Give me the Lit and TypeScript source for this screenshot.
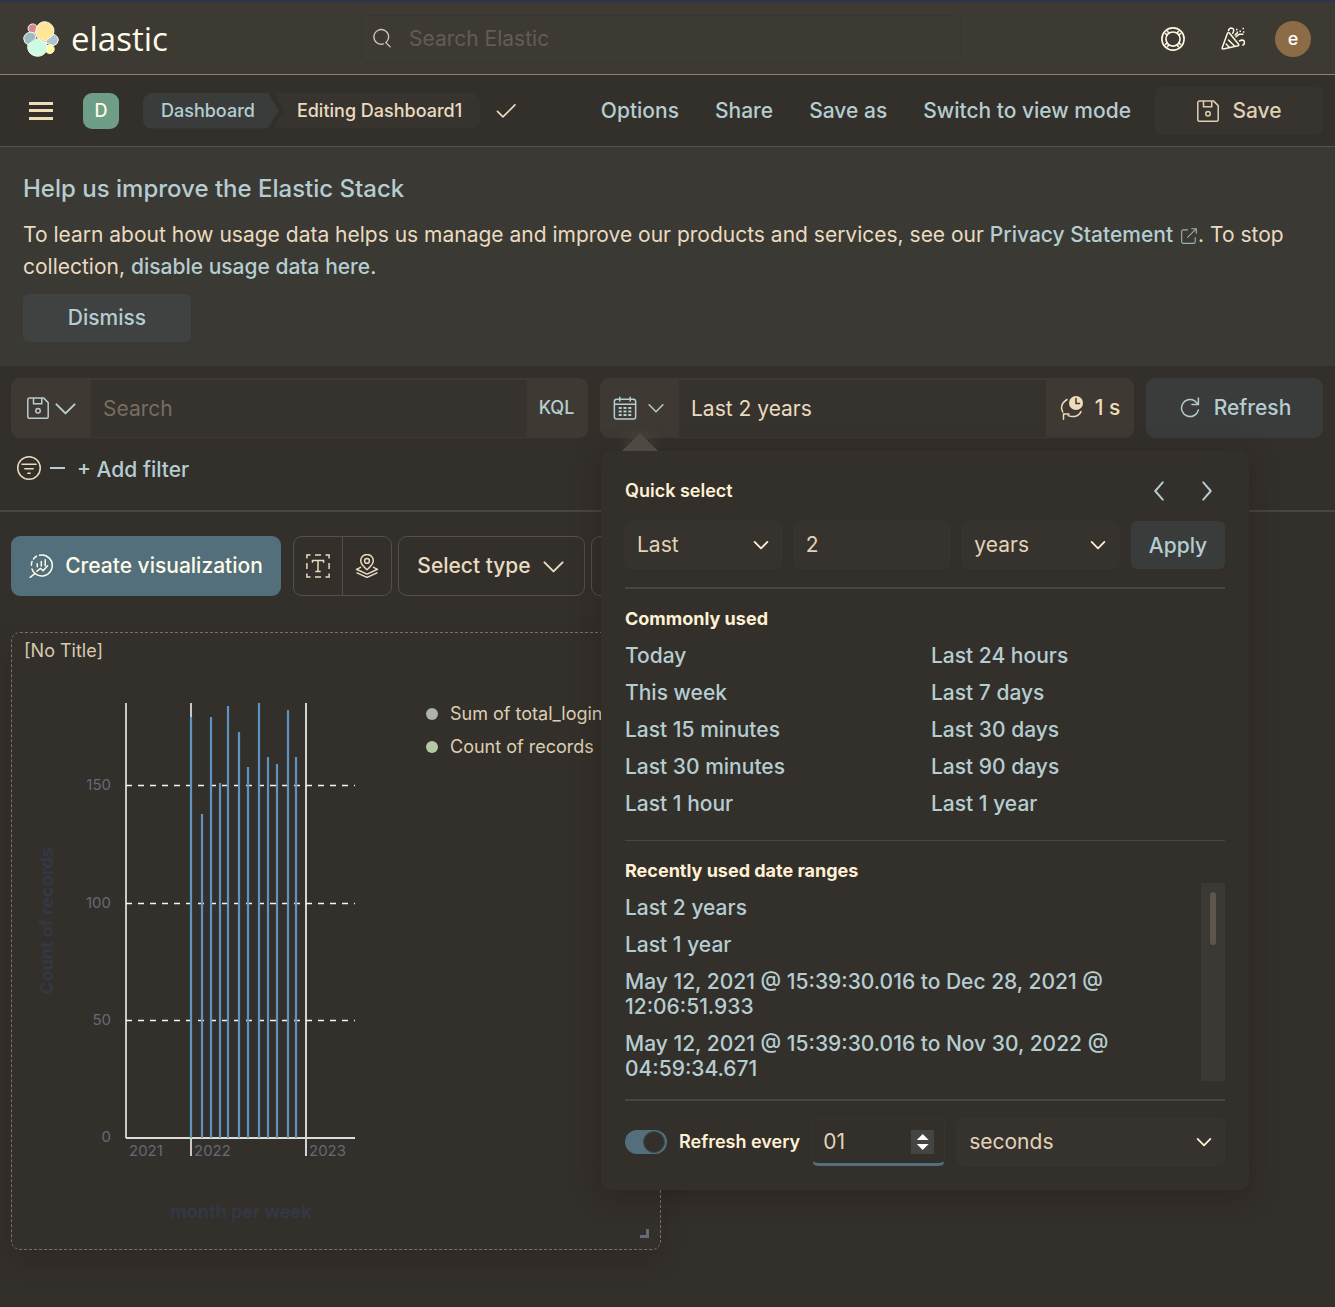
import { LitElement, html, css, svg } from "lit";
import { customElement } from "lit/decorators.js";

const stroke = (body: unknown, size = 24, view = 16) => html`<svg
  class="icon" width=${size} height=${size} viewBox="0 0 ${view} ${view}"
  fill="none" stroke="currentColor" aria-hidden="true">${body}</svg>`;

const icons = {
  search: svg`<path d="M9.6 12.1A5.6 5.6 0 1 1 11.4 11.1M11.3 11L14.6 14.4" stroke-linecap="round"/>`,
  save: svg`<path d="M1.2 2.4a1 1 0 0 1 1-1h9.6l3 3v9.4a1 1 0 0 1-1 1H2.2a1 1 0 0 1-1-1zM5 1.5v3.7h5.5V1.5"/><circle cx="8" cy="9.9" r="1.5"/>`,
  chevron: svg`<path d="M3 5.700l5 5 5-5" stroke-width="1.100" stroke-linecap="round" stroke-linejoin="round"/>`,
  small: svg`<path d="M2.300 5.300L8 11l5.700-5.700" stroke-width="1.600" stroke-linecap="round" stroke-linejoin="round"/>`,
  left: svg`<path d="M10.5 2.200L5.500 8l5 5.800" stroke-width="1.300" stroke-linecap="round" stroke-linejoin="round"/>`,
  right: svg`<path d="M5.5 2.200l5 5.800-5 5.800" stroke-width="1.300" stroke-linecap="round" stroke-linejoin="round"/>`,
  check: svg`<path d="M1.800 8.300l4 4 8.700-8.700" stroke-width="1.200" stroke-linecap="round" stroke-linejoin="round"/>`,
  ring: svg`<circle cx="8" cy="8" r="7.4" stroke-width="1.1"/><circle cx="8" cy="8" r="4.700" stroke-width="1.1"/>
    <path stroke-width="1.1" d="M4.2 2.700l1.300 1.800M2.700 4.200l1.800 1.300M11.800 2.700l-1.300 1.800M13.300 4.200l-1.800 1.300M4.200 13.300l1.300-1.800M2.700 11.800l1.800-1.300M11.800 13.300l-1.300-1.800M13.300 11.800l-1.800-1.300"/>`,
  cheer: svg`<path stroke-linejoin="round" stroke-linecap="round" d="M4.3 4.2L.8 13.8q-.3.9.7.8l9.9-2.1q.8-.3.3-1L5.6 4q-.8-.6-1.3.2zM5 8.7l4 4M3.4 11.3l2.2 2.3M5 2.4q.3-1.6 2-1.700 1.700.2 1.400 2.200l-.6 1.300M10 6.500l2-1.600h2.600M9.400 5.300l1.300-1M12.300 9.300q2-1.200 3.200.2.6 1.600-.9 2.600"/>
    <path d="M10 1.700h1M12.300 2.800h1M14.300 1h1M10.400 3.500h1M14.600 3.300h1"/>`,
  external: svg`<path d="M7 2.500H3A1.500 1.500 0 0 0 1.500 4v9A1.500 1.500 0 0 0 3 14.500h9a1.500 1.500 0 0 0 1.500-1.500V9M6.500 9.500l8-8M10 1.500h4.500V6"/>`,
  calendar: svg`<rect x=".9" y="2.2" width="14.2" height="13.2" rx="1.5"/><path d="M1 5.500h14M4.500.5v3.200M11.500.5v3.200"/>
    <path stroke-width="1.300" stroke-dasharray="2 1.200" d="M3.800 8h8.600M3.800 10.300h8.600M3.800 12.600h8.600"/>`,
  refresh: svg`<path stroke-linecap="round" d="M13.600 9.300A5.700 5.700 0 1 1 11.100 3.200L13.300 5.300M13.600 1.300v4.300h-4.300"/>`,
  filter: svg`<circle cx="8" cy="8" r="7.5"/><path d="M3.300 5.500h9.400M5.200 8.500h5.600M7.200 11.500h1.600" stroke-linecap="round"/>`,
  text: svg`<path d="M.6 3V.6H3M6 .6h4M13 .6h2.400V3M15.400 6v4M15.400 13v2.400H13M10 15.400H6M3 15.400H.6V13M.6 10V6M4.300 5.800V4.300h7.400v1.500M8 4.300v7.400M6.200 11.700h3.600"/>`,
  pin: svg`<path stroke-linejoin="round" d="M8 10.500Q3.800 6.800 3.800 4.500a4.200 4.200 0 0 1 8.400 0Q12.200 6.800 8 10.500z"/><circle cx="8" cy="4.600" r="1.600"/><path stroke-linejoin="round" d="M4 8.700L1 10.200l7 3.200 7-3.200-3-1.500M1 12.400l7 3.200 7-3.200"/>`,
  lens: svg`<path stroke-linecap="round" d="M7 .8a7 7 0 1 1-3 12.200L.8 15.600M3.800 12.800A7 7 0 0 1 2 10M1.600 7.500A7 7 0 0 1 2 5M3 3.300A7 7 0 0 1 5 1.500M5.500 6.500v2M8.200 5v3M10.800 3.800v4M5.200 11.500l2.400-1.900 1.800 1.500 3-3.300"/>`,
};

const COMMON = [
  ["Today", "Last 24 hours"],
  ["This week", "Last 7 days"],
  ["Last 15 minutes", "Last 30 days"],
  ["Last 30 minutes", "Last 90 days"],
  ["Last 1 hour", "Last 1 year"],
];

const RECENT = [
  "Last 2 years",
  "Last 1 year",
  "May 12, 2021 @ 15:39:30.016 to Dec 28, 2021 @ 12:06:51.933",
  "May 12, 2021 @ 15:39:30.016 to Nov 30, 2022 @ 04:59:34.671",
];

/* Monthly columns: horizontal position and top edge inside the chart. */
const BARS = [
  [179, 37], [190, 134], [199, 37], [208, 103], [216, 26], [227, 52],
  [236, 87], [247, 23], [256, 77], [265, 84], [276, 30], [284, 77],
];

@customElement("date-popover")
export class DatePopover extends LitElement {
  static styles = css`
    :host { display: block; font: 400 21px/25px Inter, sans-serif; color: #e2d3b8; }
    * { box-sizing: border-box; }
    button, input, select { font: inherit; color: inherit; border: 0; margin: 0; background: none; }
    .icon { display: block; flex: none; }
    .panel { background: #332f2b; border-radius: 9px; padding: 24px; box-shadow: 0 6px 30px rgba(20, 17, 14, 0.3); }
    .head { display: flex; align-items: center; height: 32px; }
    h3 { margin: 0; flex: 1; font: 700 18px/32px Inter, sans-serif; color: #fff1d4; }
    .head h3 { font-weight: 600; }
    .arrows { display: flex; gap: 24px; padding-right: 6px; color: #b5cdd0; }
    .arrows button { padding: 0; }
    .row { display: flex; gap: 12px; margin-top: 14px; }
    .field { position: relative; flex: 1; min-width: 0; }
    .box { display: block; appearance: none; width: 100%; height: 48px; padding: 0 11px 2px; border-radius: 6px; background: #36322d; border: 1px solid #38342f; }
    .field .icon { position: absolute; right: 12px; top: 15px; pointer-events: none; color: #fff1d4; }
    .apply { width: 94px; height: 48px; border-radius: 6px; background: #393c3b; color: #b5cdd0; font-weight: 500; padding: 0; }
    hr { border: 0; height: 2px; background: #494540; margin: 18px 0 14px; }
    hr.mid { height: 1px; margin-top: 24px; }
    .links { display: grid; grid-template-columns: 1fr 1fr; gap: 12px; margin-top: 8px; }
    a { color: #b5cdd0; text-decoration: none; font-weight: 500; }
    .recent { display: flex; margin-top: -4px; }
    .list { flex: 1; display: flex; flex-direction: column; gap: 12px; padding-top: 12px; padding-right: 60px; height: 198px; overflow: hidden; }
    .track { width: 24px; height: 198px; padding: 9px; background: #3b3934; }
    .thumb { width: 6px; height: 53px; border-radius: 3px; background: #5e564e; }
    .auto { display: flex; align-items: center; gap: 12px; margin-top: 17px; }
    .toggle { display: flex; align-items: center; gap: 12px; margin: 0; font: 600 18px/24px Inter, sans-serif; color: #fff1d4; white-space: nowrap; }
    .toggle input { appearance: none; display: flex; justify-content: flex-end; align-items: center; width: 42px; height: 24px; padding: 2px; border-radius: 12px; background: #526f7b; }
    .toggle input::before { content: ""; width: 20px; height: 20px; border-radius: 50%; background: #332f2b; border: 1px solid #3e4a4d; }
    .count { flex: none; width: 133px; }
    .count .box { appearance: textfield; background: #332f2b; border-bottom: 3px solid #526f7b; padding: 0 10px; }
    .count .box::-webkit-inner-spin-button { appearance: none; }
    .spin { position: absolute; right: 11px; top: 12px; width: 23px; height: 24px; display: flex; flex-direction: column; align-items: center; justify-content: space-between; padding: 4px 0; background: #444443; }
    .spin button { width: 12px; height: 6px; padding: 0; background: #fff; clip-path: polygon(50% 0, 100% 100%, 0 100%); }
    .spin button + button { clip-path: polygon(0 0, 100% 0, 50% 100%); }
  `;

  render() {
    return html`<section class="panel" role="dialog" aria-label="Date quick select">
      <div class="head">
        <h3>Quick select</h3>
        <div class="arrows">
          <button aria-label="Previous time window">${stroke(icons.left)}</button>
          <button aria-label="Next time window">${stroke(icons.right)}</button>
        </div>
      </div>
      <div class="row">
        <div class="field"><select class="box" aria-label="Time tense"><option>Last</option></select>${stroke(icons.small, 18)}</div>
        <div class="field"><input class="box" aria-label="Time value" value="2" /></div>
        <div class="field"><select class="box" aria-label="Time unit"><option>years</option></select>${stroke(icons.small, 18)}</div>
        <button class="apply">Apply</button>
      </div>
      <hr />
      <h3>Commonly used</h3>
      <div class="links">
        ${COMMON.map((pair) => pair.map((t) => html`<a href="#">${t}</a>`))}
      </div>
      <hr class="mid" />
      <h3>Recently used date ranges</h3>
      <div class="recent">
        <div class="list">${RECENT.map((t) => html`<a href="#">${t}</a>`)}</div>
        <div class="track"><div class="thumb"></div></div>
      </div>
      <hr />
      <div class="auto">
        <label class="toggle"><input type="checkbox" role="switch" checked />Refresh every</label>
        <div class="field count">
          <input class="box" type="number" aria-label="Refresh interval value" value="01" />
          <span class="spin"><button aria-label="Increase"></button><button aria-label="Decrease"></button></span>
        </div>
        <div class="field"><select class="box" aria-label="Refresh interval units"><option>seconds</option></select>${stroke(icons.small, 18)}</div>
      </div>
    </section>`;
  }
}

@customElement("app-root")
export class AppRoot extends LitElement {
  static styles = css`
    :host { display: block; min-height: 100vh; background: #332f2b; color: #eadbc0; font: 400 21px/32px Inter, sans-serif; overflow-x: clip; }
    * { box-sizing: border-box; }
    button, input { font: inherit; color: inherit; border: 0; margin: 0; padding: 0; background: none; }
    input { min-width: 0; }
    input::placeholder { color: #766d61; opacity: 1; }
    a { color: #b5cdd0; text-decoration: none; font-weight: 500; }
    .icon { display: block; flex: none; }

    .top { display: grid; grid-template-columns: minmax(0, 1fr) minmax(0, 600px) minmax(0, 1fr); align-items: center; height: 75px; padding: 0 24px 0 11px; background: #3d3933; border-top: 3px solid #30354a; border-bottom: 1px solid #8f826d; color: #fff8e0; }
    .brand { display: flex; align-items: center; gap: 12px; padding-left: 12px; color: #fffbe8; font: 400 33px/48px "Open Sans", sans-serif; }
    .find { display: flex; align-items: center; gap: 17px; height: 48px; padding: 0 9px; border: 1px solid #393530; border-radius: 6px; color: #cfc9bd; }
    .find input { flex: 1; height: 46px; }
    .find input::placeholder { color: #635d54; }
    .tools { display: flex; justify-content: flex-end; align-items: center; gap: 36px; }
    .user { width: 36px; height: 36px; margin-left: -6px; border-radius: 50%; background: #8c6b47; color: #fff; font: 500 18px/36px Inter, sans-serif; }

    .bar { display: flex; align-items: center; height: 72px; padding: 0 12px 0 29px; border-bottom: 1px solid #57534d; }
    .burger { display: flex; flex-direction: column; justify-content: space-between; width: 24px; height: 18px; }
    .burger i { height: 3px; background: #efdcba; }
    .space { width: 36px; height: 36px; margin: 0 24px 0 30px; border-radius: 9px; background: #6f9e88; color: #fffbe8; font: 500 18px/36px Inter, sans-serif; }
    .crumbs { display: flex; font: 500 18px/36px Inter, sans-serif; }
    .crumbs a { padding: 0 24px 0 18px; background: #393c3b; border-radius: 9px 0 0 9px; clip-path: polygon(0 0, calc(100% - 11px) 0, 100% 50%, calc(100% - 11px) 100%, 0 100%); }
    .crumbs span { padding: 0 18px 0 24px; margin-left: -6px; background: #37332e; border-radius: 0 9px 9px 0; clip-path: polygon(0 0, 100% 0, 100% 100%, 0 100%, 11px 50%); }
    .tick { margin-left: 15px; color: #efdcba; }
    .menu { display: flex; gap: 36px; margin-left: auto; white-space: nowrap; }
    .save { display: flex; align-items: center; justify-content: center; gap: 12px; width: 168px; height: 48px; margin-left: 24px; border-radius: 6px; background: #37332e; color: #dfceb0; font-weight: 500; }

    .callout { padding: 24px 23px; background: #3b3934; }
    .callout h2 { margin: 0 0 12px; font: 500 24px/36px Inter, sans-serif; color: #b5cdd0; }
    .callout p { margin: 0 0 11px; }
    .callout .icon { display: inline-block; vertical-align: -3px; margin-left: 7px; opacity: 0.8; }
    .dismiss { display: block; width: 168px; height: 48px; border-radius: 6px; background: #3f4240; color: #b5cdd0; font-weight: 500; }

    .query { display: grid; grid-template-columns: minmax(0, 577fr) minmax(0, 534fr) 177px; gap: 12px; padding: 12px 12px 0 11px; }
    .group { display: flex; height: 60px; border-radius: 9px; background: #3e3a33; }
    .group > input { flex: 1; padding: 0 12px; margin: 2px 0 1px; background: #36322d; }
    .group > button, .anchor > button { display: flex; align-items: center; justify-content: center; height: 60px; color: #b5cdd0; font-weight: 500; }
    .group > .saved { width: 80px; gap: 1px; padding-left: 3px; }
    .group > .kql { width: 61px; padding-right: 2px; font-size: 18px; }
    .anchor { position: relative; width: 79px; }
    .anchor > .dates { width: 79px; gap: 8px; }
    .arrow { position: absolute; left: 22px; top: 55px; width: 36px; height: 18px; background: #4e4a42; clip-path: polygon(50% 0, 100% 100%, 0 100%); z-index: 2; }
    .glow { position: absolute; left: 30px; top: 62px; width: 20px; height: 6px; box-shadow: 0 0 12px 4px rgba(90, 86, 76, 0.5); }
    date-popover { position: absolute; left: 1px; top: 73px; width: 648px; z-index: 1; }
    .group > .every { width: 88px; gap: 11px; color: #efdcba; }
    .refresh { display: flex; align-items: center; justify-content: center; gap: 12px; height: 60px; border-radius: 9px; background: #393c3b; color: #b5cdd0; font-weight: 500; }

    .filters { display: flex; align-items: center; gap: 9px; height: 74px; padding: 0 17px 12px; border-bottom: 2px solid #494540; }
    .dash { width: 15px; height: 2px; background: #b5cdd0; }
    .filters a { margin-left: 3px; padding-top: 4px; }

    .toolbar { display: flex; gap: 6px; padding: 24px 11px 36px; }
    .toolbar button { display: flex; align-items: center; justify-content: center; height: 60px; border: 1px solid #544f49; border-radius: 9px; font-weight: 500; }
    .toolbar .create { width: 270px; gap: 12px; margin-right: 6px; border: 0; background: #526f7b; color: #fffbe8; }
    .pair { display: flex; }
    .pair button { width: 50px; border-radius: 9px 0 0 9px; }
    .pair button + button { border-radius: 0 9px 9px 0; margin-left: -1px; }
    .toolbar .type { width: 187px; gap: 8px; padding-left: 2px; }
    .toolbar .library { width: 200px; }

    .grid { display: grid; grid-template-columns: 1fr 1fr; gap: 12px; padding: 0 12px 58px 11px; }
    .card { position: relative; border: 1px dashed #797263; border-radius: 9px; height: 618px; box-shadow: 0 12px 24px rgba(28, 24, 20, 0.2); }
    .card h3 { margin: 0; padding: 0 12px; font: 400 18px/36px Inter, sans-serif; color: #d9caae; }
    .viz { display: flex; gap: 24px; margin-top: 11px; }
    .viz text { font: 400 15px Inter, sans-serif; fill: #656a76; }
    .viz .axis { font: 700 18px Inter, sans-serif; fill: #343744; }
    .legend { list-style: none; margin: 17px 0 0; padding: 0; white-space: nowrap; font-size: 18px; line-height: 33px; color: #dfcfb2; }
    .legend li { display: flex; align-items: center; gap: 12px; }
    .dot { width: 12px; height: 12px; border-radius: 50%; background: #aab3ac; }
    .dot.green { background: #b4c8a8; }
    .corner { position: absolute; right: 11px; bottom: 11px; width: 9px; height: 9px; border: solid #646a78; border-width: 0 3px 3px 0; }
  `;

  private chart() {
    return svg`<svg width="390" height="568" viewBox="0 0 390 568" role="img" aria-label="Count of records by month per week">
      <g stroke="#c9c8c6" stroke-width="2">
        <path d="M114 23V458M179 23V476" />
        <path d="M294 23V476" stroke="#d4d3d1" />
      </g>
      <path d="M114 105.500H343M114 223.500H343M114 340.500H343" stroke="#f5f5f3" stroke-width="1.500" stroke-dasharray="6 6" />
      <path d="M114 458H343" stroke="#dddcda" stroke-width="2" />
      ${BARS.map(([x, y]) => svg`<path d="M${x} ${y}V457" stroke="#5e93c4" stroke-width="2.200" /><path d="M${x - 1} 457.500h2" stroke="#54b399" />`)}
      <text x="99" y="110" text-anchor="end">150</text>
      <text x="99" y="228" text-anchor="end">100</text>
      <text x="99" y="345" text-anchor="end">50</text>
      <text x="99" y="462" text-anchor="end">0</text>
      <text x="117" y="476">2021</text>
      <text x="182" y="476">2022</text>
      <text x="297" y="476">2023</text>
      <text class="axis" x="229" y="538" text-anchor="middle">month per week</text>
      <text class="axis" transform="translate(41 241) rotate(-90)" text-anchor="middle">Count of records</text>
    </svg>`;
  }

  render() {
    return html`
      <header class="top">
        <div class="brand">
          <svg width="36" height="36" viewBox="0 0 36 36" aria-hidden="true" stroke="#fffbe8" stroke-width="1">
            <circle cx="9.700" cy="7.500" r="4.600" fill="#d4888f" />
            <path fill="#9abac4" d="M6.800 11.200Q1 12.500.7 17.600 1 22.500 5.200 23.800L13 17 11.500 12.500Q9 10.800 6.800 11.200z" />
            <path fill="#aec6d4" d="M29.400 12.700Q35.300 14.700 35.300 19q-.3 4.200-4.500 5.700L24 22.500l-2-4z" />
            <circle cx="26.800" cy="28.200" r="4.400" fill="#fdfc9c" />
            <path fill="#cdfce4" d="M14.500 17.500l8.500 4q2.300 4.500.4 8.600-3.200 5.200-9.100 5.200-7.600-.8-9.500-7.400-.4-2.700.4-4.600z" />
            <path fill="#ffe699" d="M13.500 6.300Q16.500.7 21.700.7q6.600.6 9 6.700.9 3.700-1 6.800l-7.200 6.100-8.200-3.800-1.800-4.200z" />
          </svg>
          <span>elastic</span>
        </div>
        <label class="find">${stroke(icons.search, 21)}<input type="search" placeholder="Search Elastic" aria-label="Search Elastic" /></label>
        <div class="tools">
          <button aria-label="Help menu">${stroke(icons.ring)}</button>
          <button aria-label="What's new">${stroke(icons.cheer)}</button>
          <button class="user">e</button>
        </div>
      </header>

      <nav class="bar">
        <button class="burger" aria-label="Toggle navigation"><i></i><i></i><i></i></button>
        <button class="space">D</button>
        <div class="crumbs"><a href="#">Dashboard</a><span>Editing Dashboard1</span></div>
        <span class="tick">${stroke(icons.check, 22)}</span>
        <div class="menu">
          <a href="#">Options</a><a href="#">Share</a><a href="#">Save as</a><a href="#">Switch to view mode</a>
        </div>
        <button class="save">${stroke(icons.save)}Save</button>
      </nav>

      <section class="callout">
        <h2>Help us improve the Elastic Stack</h2>
        <p>To learn about how usage data helps us manage and improve our products and services, see our
          <a href="#">Privacy Statement${stroke(icons.external, 18)}</a>. To stop collection, <a href="#">disable usage data here</a>.</p>
        <button class="dismiss">Dismiss</button>
      </section>

      <div class="query">
        <div class="group">
          <button class="saved" aria-label="Saved query menu">${stroke(icons.save)}${stroke(icons.chevron, 29)}</button>
          <input placeholder="Search" aria-label="Search query" />
          <button class="kql">KQL</button>
        </div>
        <div class="group">
          <div class="anchor">
            <button class="dates" aria-label="Date quick select">${stroke(icons.calendar)}${stroke(icons.chevron, 22)}</button>
            <span class="glow"></span>
            <date-popover></date-popover>
            <span class="arrow"></span>
          </div>
          <input value="Last 2 years" aria-label="Date range" />
          <button class="every">
            <svg class="icon" width="24" height="24" viewBox="0 0 24 24" fill="none" stroke="currentColor" stroke-width="1.500" stroke-linecap="round" aria-hidden="true">
              <circle cx="16" cy="7" r="7" fill="currentColor" stroke="none" />
              <path d="M16 2.500V7.500H19.500" stroke="#3e3a33" />
              <path d="M7 3.500Q1.500 7 1.500 12q.2 2 1.300 4M21 15.500q-1.500 3.800-5.300 4.700-3.500 1-7.500-.6M3.500 23.200V18M3.500 18H9" />
            </svg>1 s
          </button>
        </div>
        <button class="refresh">${stroke(icons.refresh)}Refresh</button>
      </div>

      <div class="filters">
        <button aria-label="Filter options">${stroke(icons.filter)}</button>
        <span class="dash"></span>
        <a href="#">+ Add filter</a>
      </div>

      <div class="toolbar">
        <button class="create">${stroke(icons.lens)}Create visualization</button>
        <div class="pair">
          <button aria-label="Text">${stroke(icons.text)}</button>
          <button aria-label="Maps">${stroke(icons.pin)}</button>
        </div>
        <button class="type">Select type${stroke(icons.chevron, 29)}</button>
        <button class="library" aria-label="Add from library"></button>
      </div>

      <main class="grid">
        <article class="card">
          <h3>[No Title]</h3>
          <div class="viz">
            ${this.chart()}
            <ul class="legend">
              <li><span class="dot"></span>Sum of total_logins</li>
              <li><span class="dot green"></span>Count of records</li>
            </ul>
          </div>
          <span class="corner"></span>
        </article>
      </main>
    `;
  }
}
